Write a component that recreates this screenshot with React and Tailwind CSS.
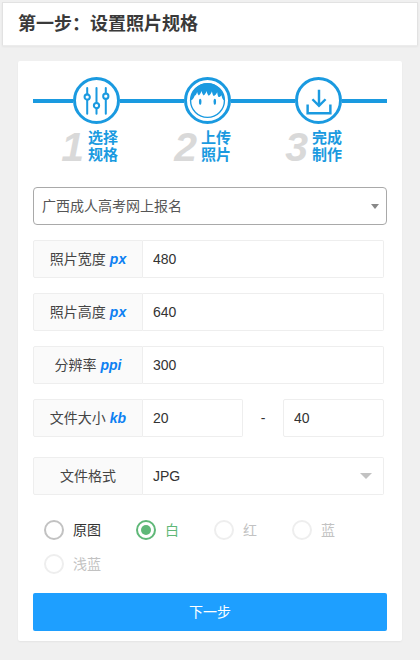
import React from 'react';

const cjk = 'font-["Liberation_Sans","Noto_Sans_CJK_SC",sans-serif]';

const SlidersIcon = () => (
    <svg viewBox="0 0 40 40" className="w-[31px] h-[31px]" fill="none" stroke="#1a9ae0" strokeWidth="2.6" strokeLinecap="round">
        <path d="M8 4v8M8 19v18" />
        <circle cx="8" cy="15.5" r="3.4" />
        <path d="M20 4v19M20 30v7" />
        <circle cx="20" cy="26.5" r="3.4" />
        <path d="M32 4v7M32 18v19" />
        <circle cx="32" cy="14.5" r="3.4" />
    </svg>
);

const FaceIcon = () => (
    <svg viewBox="0 0 38 38" className="w-[37px] h-[37px]">
        <circle cx="19" cy="19" r="17.4" fill="#fff" stroke="#1a9ae0" strokeWidth="1.4" />
        <path d="M1.8 19C1.8 9 9.5 1.4 19 1.4S36.2 9 36.2 19c-1.6-.8-2.4-2.8-2.8-5.4-1 1.4-2 1.8-3 1.8-.8-1.2-1.2-3-1.4-5-1 2-2.2 3.4-3.6 4-1-1.2-1.6-3-1.8-5-.8 2.2-1.8 3.8-3.4 4.8-1-1.4-1.8-3-2-5-.8 2-1.8 3.6-3.2 4.6-1-1.2-1.8-2.6-2-4.6-.8 2-1.6 3.4-2.8 4.6-1-.8-1.6-2.2-1.8-3.6-.6 2-1.4 3.2-2.6 4-.4 1.4-1.4 3.4-3 4.4z" fill="#1a9ae0" />
        <ellipse cx="11.5" cy="20.5" rx="1.3" ry="3.2" fill="#1a9ae0" />
        <ellipse cx="26.5" cy="20.5" rx="1.3" ry="3.2" fill="#1a9ae0" />
    </svg>
);

const DownloadIcon = () => (
    <svg viewBox="0 0 32 32" className="w-[28px] h-[28px]" fill="none" stroke="#1a9ae0" strokeWidth="2.8">
        <path d="M16 3v18M8.5 14l7.5 7.5 7.500-7.500" />
        <path d="M3 20v10h26V20" />
    </svg>
);

const Circle = ({ children }) => (
    <div className="w-[47px] h-[47px] shrink-0 rounded-full border-[3.5px] border-[#1a9ae0] bg-white flex items-center justify-center">
        {children}
    </div>
);

const Line = ({ className }) => <div className={`h-[4px] bg-[#1a9ae0] ${className}`} />;

const StepLabel = ({ num, top, bottom, numWidth }) => (
    <div className="w-[111px] flex items-start">
        <div className={`${numWidth} shrink-0 text-right pr-[4px] font-["Liberation_Sans",sans-serif] italic font-bold text-[41px] leading-[36px] text-[#d9d9d9]`}>
            {num}
        </div>
        <div className="text-[15px] leading-[17px] font-bold text-[#1a9ae0]">
            <div>{top}</div>
            <div>{bottom}</div>
        </div>
    </div>
);

const Row = ({ label, unit, children, className = '' }) => (
    <div className={`flex h-[38px] ${className}`}>
        <div className="w-[110px] shrink-0 flex items-center justify-center gap-[4px] bg-[#fafafa] border border-[#eeeeee] rounded-l-[2px] text-[14px] text-[#444]">
            <span>{label}</span>
            {unit && <span className='font-["Liberation_Sans",sans-serif] italic font-bold text-[#0d80f2]'>{unit}</span>}
        </div>
        {children}
    </div>
);

const Field = ({ value, className = 'flex-1' }) => (
    <input
        readOnly
        value={value}
        className={`${className} min-w-0 h-[38px] px-[10px] border border-l-0 border-[#eeeeee] rounded-r-[2px] bg-white text-[14px] text-[#333] outline-none font-["Liberation_Sans",sans-serif]`}
    />
);

const Radio = ({ label, state, width = 'w-[78px]' }) => {
    const ring = state === 'checked' ? 'border-[#5fb878]' : state === 'normal' ? 'border-[#c2c2c2]' : 'border-[#eeeeee]';
    const text = state === 'checked' ? 'text-[#5fb878]' : state === 'normal' ? 'text-[#333]' : 'text-[#c2c2c2]';
    return (
        <div className={`${width} h-[34px] flex items-center`}>
            <div className={`w-[20px] h-[20px] rounded-full border-2 ${ring} flex items-center justify-center`}>
                {state === 'checked' && <div className="w-[10px] h-[10px] rounded-full bg-[#5fb878]" />}
            </div>
            <span className={`ml-[9px] text-[14px] ${text}`}>{label}</span>
        </div>
    );
};

const App = () => {
    return (
        <div className={`w-[420px] h-[660px] overflow-hidden bg-[#f0f0f0] pt-[2px] ${cjk}`}>
            <div className="mx-[2px] h-[44px] bg-white border border-[#e2e2e2] border-b-[#ececec] shadow-[0_1px_2px_rgba(0,0,0,0.05)] flex items-center pl-[15px]">
                <h1 className="text-[18px] font-bold text-[#3a3a3a]">第一步：设置照片规格</h1>
            </div>

            <div className="mx-[18px] mt-[15px] h-[580px] bg-white rounded-[2px] shadow-[0_1px_2px_rgba(0,0,0,0.05)] px-[15px] pt-[16px]">
                <div className="flex items-center">
                    <Line className="w-[40px]" />
                    <Circle><SlidersIcon /></Circle>
                    <Line className="w-[64px]" />
                    <Circle><FaceIcon /></Circle>
                    <Line className="w-[64px]" />
                    <Circle><DownloadIcon /></Circle>
                    <Line className="w-[45px]" />
                </div>

                <div className="flex mt-[5px] h-[33px]">
                    <StepLabel num="1" top="选择" bottom="规格" numWidth="w-[55px]" />
                    <StepLabel num="2" top="上传" bottom="照片" numWidth="w-[57px]" />
                    <StepLabel num="3" top="完成" bottom="制作" numWidth="w-[57px]" />
                </div>

                <div className="mt-[25px] h-[38px] border border-[#a9a9a9] rounded-[4px] flex items-center justify-between pl-[8px] pr-[7px] text-[14px] text-[#555]">
                    <span>广西成人高考网上报名</span>
                    <div className="w-0 h-0 border-x-[4px] border-x-transparent border-t-[5px] border-t-[#888]" />
                </div>

                <div className="w-[351px]">
                    <Row label="照片宽度" unit="px" className="mt-[15px]"><Field value="480" /></Row>
                    <Row label="照片高度" unit="px" className="mt-[15px]"><Field value="640" /></Row>
                    <Row label="分辨率" unit="ppi" className="mt-[15px]"><Field value="300" /></Row>
                    <Row label="文件大小" unit="kb" className="mt-[15px]">
                        <Field value="20" className="w-[100px]" />
                        <div className="w-[40px] flex items-center justify-center text-[14px] text-[#333]">-</div>
                        <input
                            readOnly
                            value="40"
                            className='w-[101px] h-[38px] px-[10px] border border-[#eeeeee] rounded-[2px] text-[14px] text-[#333] outline-none font-["Liberation_Sans",sans-serif]'
                        />
                    </Row>
                    <Row label="文件格式" className="mt-[20px]">
                        <div className="flex-1 flex items-center justify-between pl-[10px] pr-[11px] border border-l-0 border-[#eeeeee] rounded-r-[2px] text-[14px] text-[#333]">
                            <span>JPG</span>
                            <div className="w-0 h-0 border-x-[6px] border-x-transparent border-t-[6px] border-t-[#c2c2c2]" />
                        </div>
                    </Row>
                </div>

                <div className="mt-[18px] pl-[11px] flex flex-wrap">
                    <Radio label="原图" state="normal" width="w-[92px]" />
                    <Radio label="白" state="checked" />
                    <Radio label="红" state="disabled" />
                    <Radio label="蓝" state="disabled" />
                    <Radio label="浅蓝" state="disabled" width="w-[92px]" />
                </div>

                <button className="mt-[12px] w-full h-[38px] bg-[#1e9fff] rounded-[2px] text-white text-[14px]">下一步</button>
            </div>
        </div>
    );
};

export default App;
